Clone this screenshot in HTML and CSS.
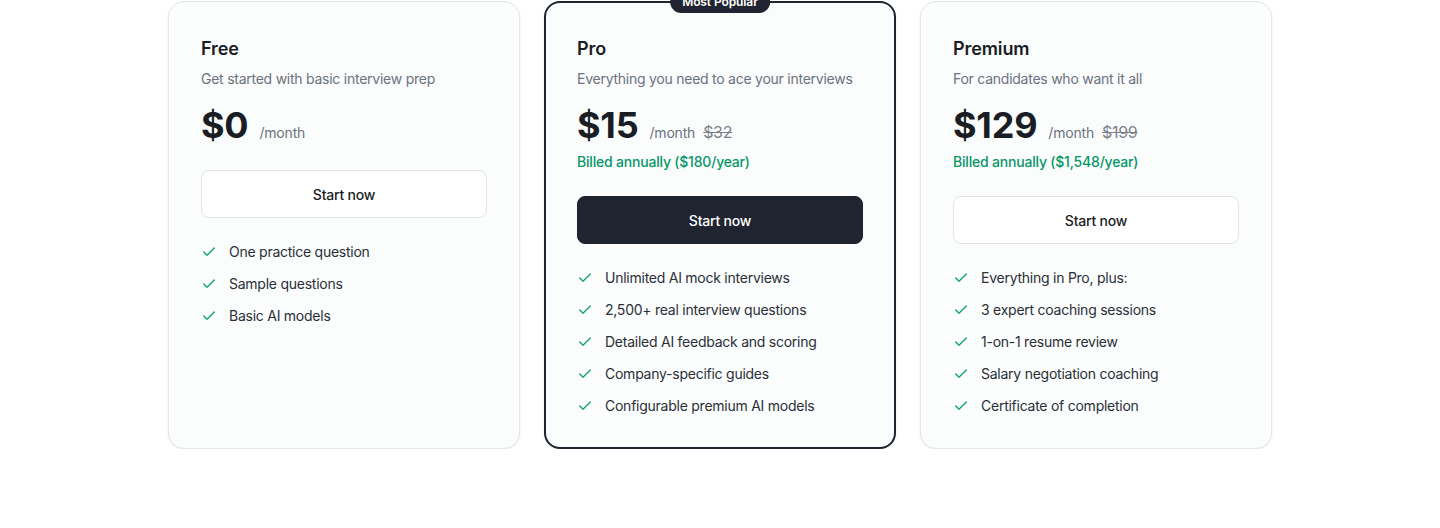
FILE: index.html
```html
<!DOCTYPE html>
<html lang="en">
<head>
<meta charset="utf-8">
<title>Pricing</title>
<link rel="stylesheet" href="styles.css">
</head>
<body>
<main class="pricing">
  <div class="plans">
    <section class="card">
      <h3 class="plan-name">Free</h3>
      <p class="plan-desc">Get started with basic interview prep</p>
      <div class="price-row">
        <span class="price">$0</span>
        <span class="period">/month</span>
      </div>
      <button class="btn btn-outline btn-first">Start now</button>
      <ul class="features">
        <li><svg class="check" viewBox="0 0 24 24"><path d="M20 6 9 17l-5-5"/></svg>One practice question</li>
        <li><svg class="check" viewBox="0 0 24 24"><path d="M20 6 9 17l-5-5"/></svg>Sample questions</li>
        <li><svg class="check" viewBox="0 0 24 24"><path d="M20 6 9 17l-5-5"/></svg>Basic AI models</li>
      </ul>
    </section>

    <section class="card card-popular">
      <span class="badge">Most Popular</span>
      <h3 class="plan-name">Pro</h3>
      <p class="plan-desc">Everything you need to ace your interviews</p>
      <div class="price-row">
        <span class="price">$15</span>
        <span class="period">/month</span>
        <span class="old-price">$32</span>
      </div>
      <p class="billed">Billed annually ($180/year)</p>
      <button class="btn btn-dark">Start now</button>
      <ul class="features">
        <li><svg class="check" viewBox="0 0 24 24"><path d="M20 6 9 17l-5-5"/></svg>Unlimited AI mock interviews</li>
        <li><svg class="check" viewBox="0 0 24 24"><path d="M20 6 9 17l-5-5"/></svg>2,500+ real interview questions</li>
        <li><svg class="check" viewBox="0 0 24 24"><path d="M20 6 9 17l-5-5"/></svg>Detailed AI feedback and scoring</li>
        <li><svg class="check" viewBox="0 0 24 24"><path d="M20 6 9 17l-5-5"/></svg>Company-specific guides</li>
        <li><svg class="check" viewBox="0 0 24 24"><path d="M20 6 9 17l-5-5"/></svg>Configurable premium AI models</li>
      </ul>
    </section>

    <section class="card">
      <h3 class="plan-name">Premium</h3>
      <p class="plan-desc">For candidates who want it all</p>
      <div class="price-row">
        <span class="price">$129</span>
        <span class="period">/month</span>
        <span class="old-price">$199</span>
      </div>
      <p class="billed">Billed annually ($1,548/year)</p>
      <button class="btn btn-outline">Start now</button>
      <ul class="features">
        <li><svg class="check" viewBox="0 0 24 24"><path d="M20 6 9 17l-5-5"/></svg>Everything in Pro, plus:</li>
        <li><svg class="check" viewBox="0 0 24 24"><path d="M20 6 9 17l-5-5"/></svg>3 expert coaching sessions</li>
        <li><svg class="check" viewBox="0 0 24 24"><path d="M20 6 9 17l-5-5"/></svg>1-on-1 resume review</li>
        <li><svg class="check" viewBox="0 0 24 24"><path d="M20 6 9 17l-5-5"/></svg>Salary negotiation coaching</li>
        <li><svg class="check" viewBox="0 0 24 24"><path d="M20 6 9 17l-5-5"/></svg>Certificate of completion</li>
      </ul>
    </section>
  </div>
</main>
</body>
</html>
```

FILE: styles.css
```css
* { box-sizing: border-box; }

html, body {
  margin: 0;
  padding: 0;
  background: #ffffff;
}

body {
  font-family: Inter, "Noto Sans", sans-serif;
  color: #1f2937;
  -webkit-font-smoothing: antialiased;
}

.pricing {
  width: 1104px;
  margin: 0 auto;
  padding-top: 1px;
}

.plans {
  display: grid;
  grid-template-columns: repeat(3, 1fr);
  gap: 24px;
  align-items: stretch;
}

.card {
  position: relative;
  background: #fbfcfc;
  border: 1px solid #e4e6e9;
  border-radius: 16px;
  padding: 33px 32px 32px;
  box-shadow: 0 1px 3px rgba(15, 23, 42, 0.07);
  display: flex;
  flex-direction: column;
}

.card-popular {
  border: 2px solid #1f2430;
  padding: 32px 31px 31px;
  box-shadow: 0 1px 3px rgba(15, 23, 42, 0.08);
}

.badge {
  position: absolute;
  top: -12px;
  left: 50%;
  transform: translateX(-50%);
  background: #1f2430;
  color: #ffffff;
  font-size: 12px;
  font-weight: 600;
  line-height: 16px;
  padding: 3px 12px 3px;
  border-radius: 999px;
  white-space: nowrap;
  letter-spacing: -0.1px;
}

.plan-name {
  margin: 0;
  font-size: 18px;
  line-height: 28px;
  font-weight: 600;
  color: #1a1d23;
  letter-spacing: -0.1px;
}

.plan-desc {
  margin: 6px 0 0;
  font-size: 14px;
  line-height: 20px;
  color: #6b7280;
  letter-spacing: -0.25px;
  white-space: nowrap;
}

.price-row {
  margin-top: 16px;
  display: flex;
  align-items: baseline;
  gap: 8px;
  height: 40px;
}

.price {
  font-size: 36px;
  line-height: 40px;
  font-weight: 700;
  color: #1a1d23;
  letter-spacing: -0.2px;
  margin-right: 3px;
}

.period {
  font-size: 14px;
  color: #6b7280;
  letter-spacing: -0.2px;
}

.old-price {
  font-size: 16px;
  color: #7b818c;
  text-decoration: line-through;
  letter-spacing: -0.3px;
}

.billed {
  margin: 7px 0 0;
  font-size: 14px;
  line-height: 20px;
  font-weight: 500;
  color: #059669;
  letter-spacing: -0.2px;
}

.btn {
  margin-top: 24px;
  height: 48px;
  width: 100%;
  border-radius: 8px;
  font-family: inherit;
  font-size: 14px;
  font-weight: 500;
  letter-spacing: -0.2px;
  cursor: pointer;
}

.btn-first {
  margin-top: 25px;
}

.btn-outline {
  background: #ffffff;
  border: 1px solid #e0e3e7;
  color: #1a1d23;
}

.btn-dark {
  background: #1f2430;
  border: 1px solid #1f2430;
  color: #ffffff;
}

.features {
  list-style: none;
  margin: 24px 0 0;
  padding: 0;
  display: flex;
  flex-direction: column;
  gap: 12px;
}

.features li {
  display: flex;
  align-items: center;
  gap: 12px;
  font-size: 14px;
  line-height: 20px;
  color: #2a2f38;
  letter-spacing: -0.25px;
}

.check {
  width: 16px;
  height: 16px;
  flex: none;
  fill: none;
  stroke: #10a474;
  stroke-width: 2;
  stroke-linecap: round;
  stroke-linejoin: round;
}
```
